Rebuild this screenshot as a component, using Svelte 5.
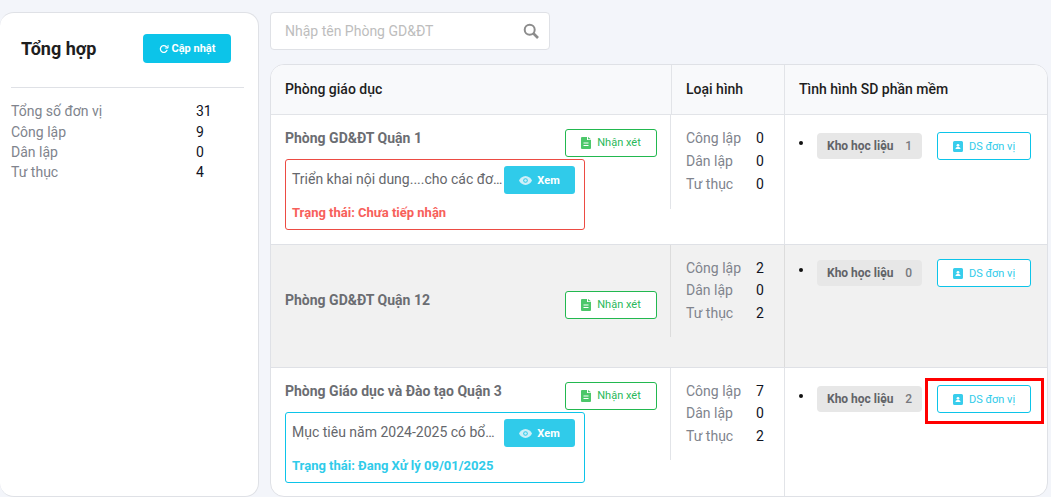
<script>
  const rows = [
    {
      name: "Phòng GD&ĐT Quận 1",
      counts: [0, 0, 0],
      lib: 1,
      note: { text: "Triển khai nội dung....cho các đơ…", status: "Trạng thái: Chưa tiếp nhận", kind: "red" }
    },
    { name: "Phòng GD&ĐT Quận 12", counts: [2, 0, 2], lib: 0, shaded: true },
    {
      name: "Phòng Giáo dục và Đào tạo Quận 3",
      counts: [7, 0, 2],
      lib: 2,
      marked: true,
      note: { text: "Mục tiêu năm 2024-2025 có bổ…", status: "Trạng thái: Đang Xử lý 09/01/2025", kind: "blue" }
    }
  ];
  const types = ["Công lập", "Dân lập", "Tư thục"];
  const totals = [["Tổng số đơn vị", 31], ["Công lập", 9], ["Dân lập", 0], ["Tư thục", 4]];
</script>

<div class="page">
  <aside class="side">
    <div class="side-head">
      <h2>Tổng hợp</h2>
      <button class="refresh">
        <svg width="10" height="10" viewBox="0 0 16 16" fill="none" stroke="#fff" stroke-width="2"><path d="M13 9.500A5.500 5.500 0 1 1 11.500 4L14 6"/><path d="M14.500 1.500V6.500H9.500" stroke-width="1.500"/></svg>
        Cập nhật
      </button>
    </div>
    <div class="totals">
      {#each totals as [label, value]}
        <span class="t-label">{label}</span><span class="t-value">{value}</span>
      {/each}
    </div>
  </aside>

  <main class="main">
    <div class="search">
      <span>Nhập tên Phòng GD&ĐT</span>
      <svg width="16" height="16" viewBox="0 0 16 16" fill="none" stroke="#8c8c8c" stroke-width="2"><circle cx="6.700" cy="6.700" r="5"/><path d="M10.500 10.500L15 15" stroke-width="2.600"/></svg>
    </div>

    <div class="table">
      <div class="head first">Phòng giáo dục</div>
      <div class="head second">Loại hình</div>
      <div class="head third">Tình hình SD phần mềm</div>

      {#each rows as row}
        <div class="row" class:shaded={row.shaded} class:has-note={row.note}>
          <div class="cell-name">
            <div class="name-line">
              <span class="name">{row.name}</span>
              <button class="comment">
                <svg width="10" height="12" viewBox="0 0 10 12"><path fill="#4cc76a" d="M0 1a1 1 0 0 1 1-1h5v3h4v8a1 1 0 0 1-1 1H1a1 1 0 0 1-1-1z"/><path fill="#4cc76a" d="M7 0l3 2.300H7z"/><path stroke="#fff" d="M2.500 6h5M2.500 8.500h5"/></svg>
                Nhận xét
              </button>
            </div>
            {#if row.note}
              <div class="note {row.note.kind}">
                <div class="note-top">
                  <span class="note-text">{row.note.text}</span>
                  <button class="view">
                    <svg width="13" height="9" viewBox="0 0 13 9"><path fill="#cfeff8" d="M6.500 0C9.500 0 12 2.300 13 4.500 12 6.700 9.500 9 6.500 9S1 6.700 0 4.500C1 2.300 3.500 0 6.500 0z"/><circle cx="6.500" cy="4.500" r="2.300" fill="#30cbea"/><circle cx="6.500" cy="4.500" r="1.300" fill="#cfeff8"/></svg>
                    Xem
                  </button>
                </div>
                <div class="status">{row.note.status}</div>
              </div>
            {/if}
          </div>

          <div class="cell-type">
            <div class="type-list">
              {#each types as type, i}
                <span class="type">{type}</span><span class="count">{row.counts[i]}</span>
              {/each}
            </div>
          </div>

          <div class="cell-use">
            <span class="dot"></span>
            <span class="lib"><b>Kho học liệu</b><em>{row.lib}</em></span>
            <button class="units">
              <svg width="10" height="11" viewBox="0 0 10 11"><path fill="#38cdec" d="M1.500 0h7A1.500 1.500 0 0 1 10 1.500v8A1.500 1.500 0 0 1 8.500 11h-7A1.500 1.500 0 0 1 0 9.500v-8A1.500 1.500 0 0 1 1.500 0z"/><circle cx="5" cy="4.300" r="1.400" fill="#fff"/><path fill="#fff" d="M2.500 8c0-1.300 1-1.900 2.500-1.900S7.500 6.700 7.500 8z"/></svg>
              DS đơn vị
            </button>
            {#if row.marked}<span class="mark"></span>{/if}
          </div>
        </div>
      {/each}
    </div>
  </main>
</div>

<style>
  :global(body) {
    margin: 0;
    background: #f3f5fa;
  }

  .page {
    width: 1051px;
    height: 497px;
    box-sizing: border-box;
    padding: 12px 3px 0 0;
    display: flex;
    gap: 11px;
    font-family: Roboto, "Liberation Sans", sans-serif;
    font-size: 14px;
    overflow: hidden;
  }

  button {
    font-family: inherit;
    padding: 0;
    cursor: pointer;
    display: flex;
    align-items: center;
    justify-content: center;
    box-sizing: border-box;
  }

  .side {
    width: 259px;
    height: 485px;
    box-sizing: border-box;
    background: #fff;
    border: 1px solid #dfe1e6;
    border-left: 0;
    border-radius: 14px;
    padding: 0 14px 0 11px;
    flex: none;
  }

  .side-head {
    height: 75px;
    box-sizing: border-box;
    padding: 21px 13px 0 10px;
    border-bottom: 1px solid #dfe1e6;
    display: flex;
    justify-content: space-between;
    align-items: flex-start;
  }

  h2 {
    margin: 3px 0 0;
    font-size: 18px;
    line-height: 24px;
    font-weight: 700;
    color: #1e1e1e;
  }

  .refresh {
    width: 88px;
    height: 29px;
    gap: 3px;
    border: 0;
    border-radius: 4px;
    background: #0cc4e9;
    color: #fff;
    font-size: 11px;
    font-weight: 700;
  }

  .totals {
    margin-top: 13px;
    display: grid;
    grid-template-columns: 185px 1fr;
    grid-auto-rows: 20px;
    grid-template-rows: 21px;
    line-height: 20px;
  }

  .t-label {
    color: #80848d;
  }

  .t-value {
    color: #10141f;
  }

  .main {
    flex: 1;
    min-width: 0;
  }

  .search {
    width: 280px;
    height: 38px;
    box-sizing: border-box;
    background: #fff;
    border: 1px solid #dfe1e6;
    border-radius: 4px;
    padding: 0 10px 0 14px;
    display: flex;
    align-items: center;
    justify-content: space-between;
    color: #bdbdbd;
  }

  .table {
    margin-top: 14px;
    height: 433px;
    box-sizing: border-box;
    background: #fff;
    border: 1px solid #dfe1e6;
    border-radius: 14px;
    overflow: hidden;
    display: grid;
    grid-template-columns: 400px 113px 1fr;
    grid-template-rows: 50px 130px 123px 1fr;
  }

  .head {
    background: #f8f9fb;
    border-bottom: 1px solid #e2e4e8;
    font-weight: 500;
    color: #1e1e1e;
    padding: 0 14px;
    line-height: 48px;
    box-sizing: border-box;
  }

  .head.second,
  .head.third {
    border-left: 1px solid #e2e4e8;
  }

  .row {
    grid-column: 1 / -1;
    display: grid;
    grid-template-columns: subgrid;
    border-bottom: 1px solid #dfe1e6;
    box-sizing: border-box;
  }

  .row:last-child {
    border-bottom: 0;
  }

  .row.shaded {
    background: #f1f1f1;
  }

  .cell-name {
    padding: 14px 14px 0;
    min-width: 0;
  }

  .name-line {
    display: flex;
    justify-content: space-between;
    align-items: flex-start;
  }

  .shaded .cell-name {
    padding-top: 0;
  }

  .shaded .name-line {
    height: 100%;
    align-items: center;
  }

  .name {
    color: #6b6d72;
    font-weight: 700;
    line-height: 18px;
  }

  .shaded .name {
    margin-bottom: 12px;
  }

  .comment {
    width: 92px;
    height: 28px;
    gap: 6px;
    padding-bottom: 1px;
    background: #fff;
    border: 1px solid #22b84f;
    border-radius: 3px;
    color: #28b859;
    font-size: 11px;
  }

  .shaded .comment {
    margin-bottom: 2px;
  }

  .note {
    width: 300px;
    height: 71px;
    margin-top: 2px;
    box-sizing: border-box;
    border: 1px solid;
    border-radius: 3px;
    padding: 6px 9px 0 6px;
  }

  .note.red {
    border-color: #ec4b43;
  }

  .note.blue {
    border-color: #0cc4e9;
  }

  .note-top {
    display: flex;
    align-items: center;
    justify-content: space-between;
  }

  .note-text {
    white-space: nowrap;
    color: #65676c;
    margin-bottom: 2px;
  }

  .view {
    width: 71px;
    height: 28px;
    flex: none;
    gap: 5px;
    border: 0;
    border-radius: 3px;
    background: #30cbea;
    color: #fff;
    font-size: 11px;
    font-weight: 700;
  }

  .status {
    margin-top: 10px;
    font-size: 13px;
    font-weight: 700;
    line-height: 18px;
  }

  .red .status {
    color: #f7605a;
  }

  .blue .status {
    color: #30cbea;
  }

  .type-list {
    border-left: 1px solid #e2e4e8;
    margin-left: -1px;
    padding: 11.900px 0 13px 15px;
    display: grid;
    grid-template-columns: 70px 1fr;
    line-height: 22.500px;
  }

  .head.third + .row .type-list {
    padding-top: 12px;
    line-height: 23px;
  }

  .shaded .type-list {
    padding-top: 11.700px;
    border-left-color: #dcdcdc;
  }

  .type {
    color: #80848d;
  }

  .count {
    color: #10141f;
  }

  .cell-use {
    position: relative;
    border-left: 1px solid #e2e4e8;
    padding: 18px 0 0 14px;
    display: flex;
    align-items: flex-start;
  }

  .shaded .cell-use {
    border-left-color: #dcdcdc;
    padding-top: 15px;
  }

  .dot {
    width: 4px;
    height: 4px;
    margin-top: 8px;
    border-radius: 50%;
    background: #111;
    flex: none;
  }

  .lib {
    width: 105px;
    height: 26px;
    box-sizing: border-box;
    margin-left: 14px;
    padding: 0 10px;
    background: #e7e7e7;
    border-radius: 4px;
    display: flex;
    align-items: center;
    justify-content: space-between;
    font-size: 12px;
    color: #616368;
    flex: none;
  }

  .lib b {
    font-weight: 700;
  }

  .lib em {
    font-style: normal;
    font-weight: 500;
    color: #77797e;
  }

  .units {
    width: 94px;
    height: 28px;
    margin: -1px 0 0 15px;
    gap: 6px;
    background: #fff;
    border: 1px solid #0cc4e9;
    border-radius: 3px;
    color: #30cbea;
    font-size: 11px;
    flex: none;
  }

  .mark {
    position: absolute;
    left: 140px;
    top: 10px;
    width: 119px;
    height: 46px;
    box-sizing: border-box;
    border: 3.500px solid #f00;
  }
</style>
